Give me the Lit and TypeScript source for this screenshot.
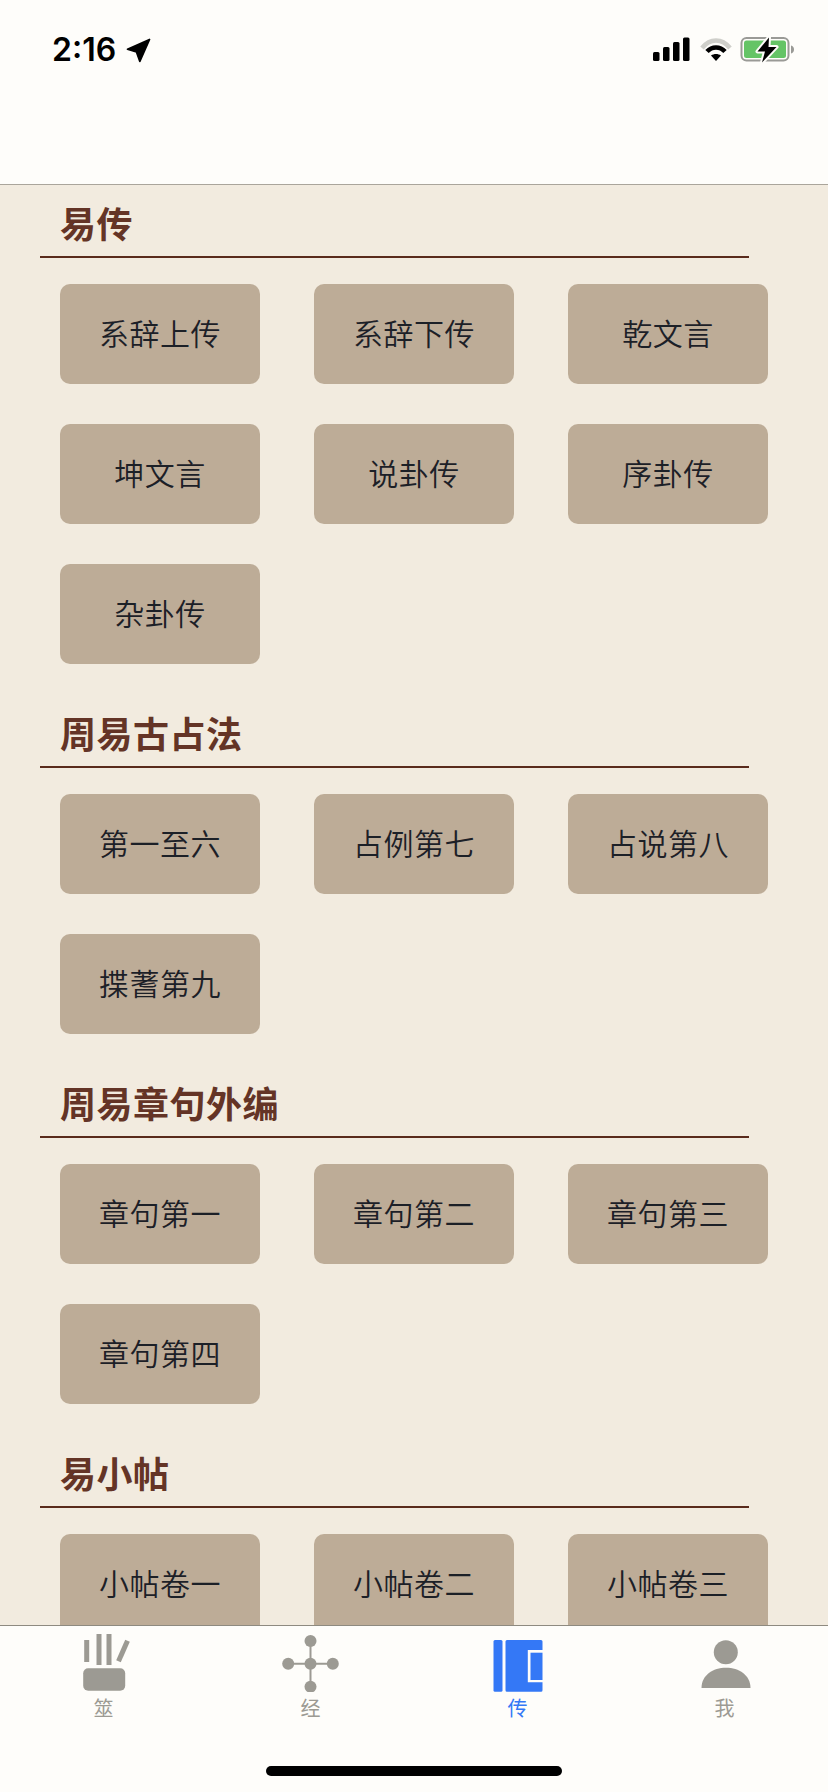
import { LitElement, html, css, svg } from "lit";
import { customElement } from "lit/decorators.js";

const SECTIONS: { title: string; items: string[] }[] = [
  { title: "易传", items: ["系辞上传", "系辞下传", "乾文言", "坤文言", "说卦传", "序卦传", "杂卦传"] },
  { title: "周易古占法", items: ["第一至六", "占例第七", "占说第八", "揲蓍第九"] },
  { title: "周易章句外编", items: ["章句第一", "章句第二", "章句第三", "章句第四"] },
  { title: "易小帖", items: ["小帖卷一", "小帖卷二", "小帖卷三"] },
];

const icons = {
  qian: svg`<rect x="10.2" y="8" width="5" height="22"/><rect x="22.5" y="2" width="5" height="31"/><rect x="32.5" y="2" width="5" height="31"/><path d="M53.5 8.7 44.5 29.3" fill="none" stroke="currentColor" stroke-width="5"/><rect x="9.2" y="36.3" width="42" height="22.4" rx="5"/>`,
  jing: svg`<path d="M29.5 9V54.7M7.2 31.7H51.8" fill="none" stroke="currentColor" stroke-width="2"/><circle cx="29.5" cy="9" r="6"/><circle cx="7.2" cy="31.7" r="6"/><circle cx="29.5" cy="31.7" r="6"/><circle cx="51.8" cy="31.7" r="6"/><circle cx="29.5" cy="54.7" r="6"/>`,
  zhuan: svg`<rect x="5.5" y="8" width="9" height="51.7" rx="1.5"/><path fill-rule="evenodd" d="M19 8H53a1.5 1.5 0 0 1 1.5 1.5V18H39.8V50.3H54.5V58.2a1.5 1.5 0 0 1-1.5 1.5H19a1.5 1.5 0 0 1-1.5-1.5V9.5A1.5 1.5 0 0 1 19 8Z"/><rect x="42.5" y="20.7" width="12" height="27.3"/>`,
  wo: svg`<circle cx="30.8" cy="20.3" r="12"/><path d="M6.5 56C6.5 43 18 35.7 31 35.7S55.5 43 55.5 56Z"/>`,
};

const TABS = [
  { label: "筮", icon: icons.qian, active: false },
  { label: "经", icon: icons.jing, active: false },
  { label: "传", icon: icons.zhuan, active: true },
  { label: "我", icon: icons.wo, active: false },
];

@customElement("app-root")
export class AppRoot extends LitElement {
  static styles = css`
    :host {
      display: flex;
      flex-direction: column;
      width: 828px;
      height: 1792px;
      overflow: hidden;
      background: #f2ebdf;
      font-family: "Noto Sans CJK SC", "Noto Sans", sans-serif;
    }
    .top {
      flex: none;
      box-sizing: border-box;
      height: 185px;
      background: #fefdfa;
      border-bottom: 1px solid #aaa59b;
    }
    .status {
      display: flex;
      align-items: center;
      justify-content: space-between;
      height: 24px;
      padding: 38px 34px 0 52px;
    }
    .time {
      display: flex;
      align-items: center;
      gap: 10px;
      font-family: Inter, "Liberation Sans", sans-serif;
      font-size: 32px;
      font-weight: 600;
      line-height: 24px;
      color: #000;
    }
    .status svg {
      display: block;
    }
    .main {
      flex: 1;
      min-height: 0;
      overflow: hidden;
      padding-top: 9px;
    }
    .section {
      padding-bottom: 40px;
    }
    .title {
      box-sizing: border-box;
      width: 709px;
      height: 64px;
      margin-left: 40px;
      padding-left: 20px;
      border-bottom: 2px solid #5a2b1c;
      font-size: 36px;
      font-weight: 700;
      letter-spacing: 0.5px;
      line-height: 57px;
      color: #643426;
    }
    .grid {
      display: grid;
      grid-template-columns: repeat(3, 200px);
      column-gap: 54px;
      row-gap: 40px;
      margin: 26px 0 0 60px;
    }
    .btn {
      box-sizing: border-box;
      display: flex;
      align-items: center;
      justify-content: center;
      height: 100px;
      padding-bottom: 4px;
      border-radius: 10px;
      background: #bdac97;
      color: #1c2027;
      font-size: 30px;
      letter-spacing: 0.5px;
      font-weight: 350;
    }
    .tabbar {
      flex: none;
      box-sizing: border-box;
      height: 167px;
      background: #fefdfa;
      border-top: 1px solid #8e8a80;
      display: flex;
      flex-direction: column;
      align-items: center;
    }
    .tabs {
      align-self: stretch;
      display: grid;
      grid-template-columns: repeat(4, 1fr);
      padding-top: 6px;
    }
    .tab {
      display: flex;
      flex-direction: column;
      align-items: center;
      gap: 4px;
      color: #9c9a93;
    }
    .tab.active {
      color: #3478f6;
    }
    .tab svg {
      display: block;
      width: 60px;
      height: 60px;
      fill: currentColor;
    }
    .tab span {
      font-size: 20px;
      line-height: 24px;
    }
    .home {
      width: 296px;
      height: 10px;
      margin-top: 46px;
      border-radius: 5px;
      background: #000;
    }
  `;

  render() {
    return html`
      <header class="top">
        <div class="status">
          <div class="time">
            <span>2:16</span>
            <svg width="25" height="25" viewBox="0 0 25 25"><path d="M23.500 1.500 1.500 11.200 10.500 14 13.800 23.300Z" stroke="#000" stroke-width="1.800" stroke-linejoin="round"/></svg>
          </div>
          <svg width="142" height="26" viewBox="0 0 142 26">
            <rect x="1" y="15" width="6.500" height="9" rx="1.500"/>
            <rect x="11" y="10" width="6.500" height="14" rx="1.500"/>
            <rect x="21" y="5" width="6.500" height="19" rx="1.500"/>
            <rect x="31" y="0.500" width="6.500" height="23.500" rx="1.500"/>
            <path d="M50 11C58 1 70 1 78 11" fill="none" stroke="#cfcfca" stroke-width="4.500"/>
            <path d="M55 14.500C60 9 68 9 73 14.500" fill="none" stroke="#000" stroke-width="4.500"/>
            <path d="M59 18.500C62 16.500 66 16.500 69 18.500L64 24Z" fill="#000"/>
            <rect x="89.500" y="1" width="47" height="22.500" rx="5" fill="none" stroke="#9a9a96" stroke-width="2"/>
            <rect x="92" y="3.500" width="42" height="17.500" rx="2.500" fill="#65c466"/>
            <path d="M139 8.500C141 9 142 10.500 142 12.500S141 16 139 16.500Z" fill="#9a9a96"/>
            <path d="M117 0.500 105.500 14.500H113L110 25.500 124.500 10H116.500Z" fill="#000" stroke="#fefdfa" stroke-width="4" stroke-linejoin="round" paint-order="stroke"/>
          </svg>
        </div>
      </header>
      <main class="main">
        ${SECTIONS.map(
          (s) => html`
            <section class="section">
              <div class="title">${s.title}</div>
              <div class="grid">
                ${s.items.map((i) => html`<div class="btn">${i}</div>`)}
              </div>
            </section>
          `
        )}
      </main>
      <nav class="tabbar">
        <div class="tabs">
          ${TABS.map(
            (t) => html`
              <div class="tab ${t.active ? "active" : ""}">
                <svg viewBox="0 0 60 60">${t.icon}</svg>
                <span>${t.label}</span>
              </div>
            `
          )}
        </div>
        <div class="home"></div>
      </nav>
    `;
  }
}
